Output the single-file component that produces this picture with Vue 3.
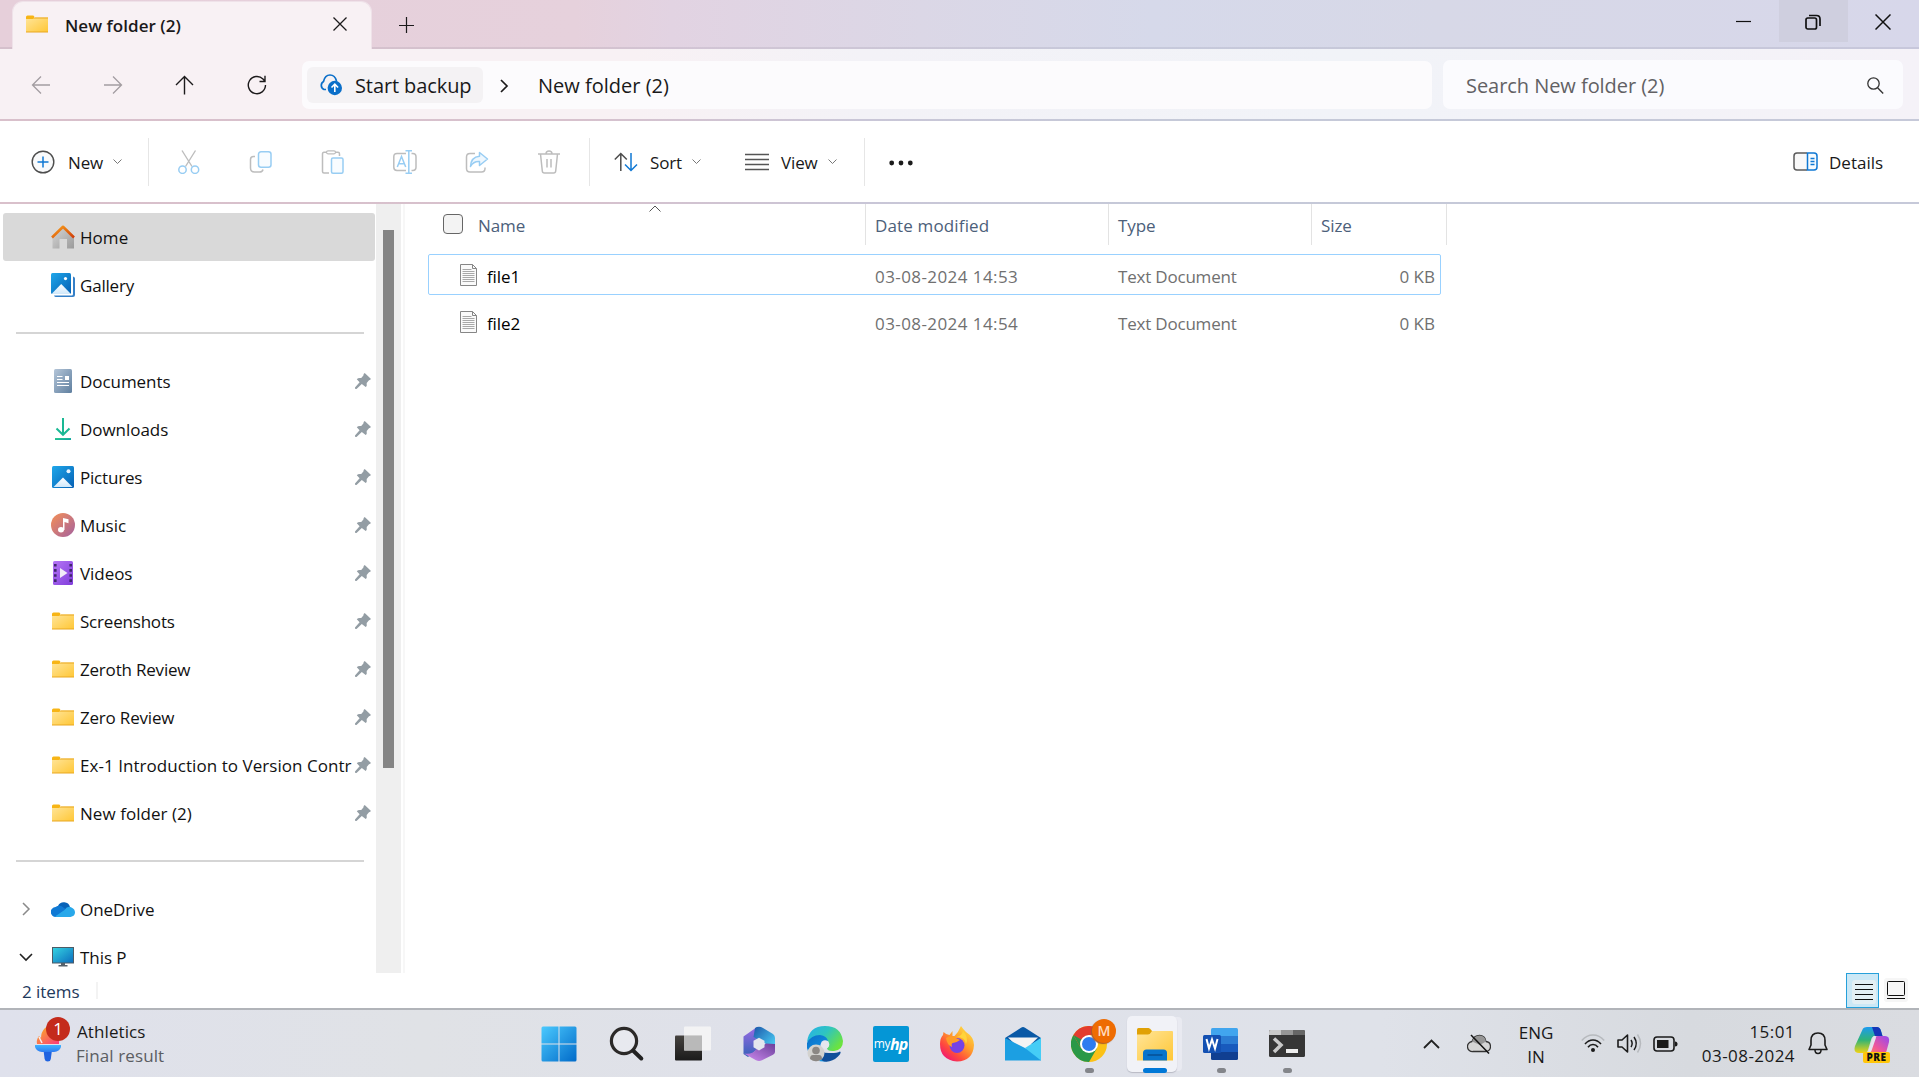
<script setup>
const places = [
  { label: 'Documents', icon: 'documents' },
  { label: 'Downloads', icon: 'downloads' },
  { label: 'Pictures', icon: 'pictures', tight: true },
  { label: 'Music', icon: 'music' },
  { label: 'Videos', icon: 'videos' },
  { label: 'Screenshots', icon: 'folder', tight: true },
  { label: 'Zeroth Review', icon: 'folder', tight: true },
  { label: 'Zero Review', icon: 'folder', tight: true },
  { label: 'Ex-1 Introduction to Version Contr', icon: 'folder', long: true },
  { label: 'New folder (2)', icon: 'folder', long: true },
]
const nav = ['back', 'forward', 'up', 'refresh']
const tools = ['cut', 'copy', 'paste', 'rename', 'share', 'trash']
const files = [
  { name: 'file1', date: '03-08-2024 14:53', type: 'Text Document', size: '0 KB', focused: true },
  { name: 'file2', date: '03-08-2024 14:54', type: 'Text Document', size: '0 KB', focused: false },
]
const apps = [
  { id: 'start' }, { id: 'search' }, { id: 'taskview' }, { id: 'm365' }, { id: 'edge' },
  { id: 'myhp' }, { id: 'firefox' }, { id: 'mail' }, { id: 'chrome', open: true },
  { id: 'explorer', active: true }, { id: 'word', open: true }, { id: 'terminal', open: true },
]
</script>

<template>
  <div class="screen">
    <svg class="defs" width="0" height="0" aria-hidden="true">
      <defs>
        <linearGradient id="gFolder" x1="0" y1="0" x2="1" y2="1"><stop offset="0" stop-color="#ffe59a" /><stop offset="1" stop-color="#ffc736" /></linearGradient>
        <linearGradient id="gBlue" x1="0" y1="0" x2="1" y2="1"><stop offset="0" stop-color="#1fa7ea" /><stop offset="1" stop-color="#0560b4" /></linearGradient>
        <linearGradient id="gSnow" x1="0" y1="0" x2="0" y2="1"><stop offset="0" stop-color="#fff" /><stop offset="1" stop-color="#cfe8fb" /></linearGradient>
        <linearGradient id="gRoof" x1="0" y1="0" x2="1" y2="1"><stop offset="0" stop-color="#f9a11b" /><stop offset="1" stop-color="#d13d0a" /></linearGradient>
        <linearGradient id="gWall" x1="0" y1="0" x2="1" y2="1"><stop offset="0" stop-color="#d8d8d8" /><stop offset="1" stop-color="#9a9a9a" /></linearGradient>
        <linearGradient id="gDoc" x1="0" y1="0" x2="1" y2="1"><stop offset="0" stop-color="#b4c5d8" /><stop offset="1" stop-color="#5f7f9f" /></linearGradient>
        <linearGradient id="gDown" x1="0" y1="0" x2="1" y2="1"><stop offset="0" stop-color="#2fd08c" /><stop offset="1" stop-color="#0d9ca6" /></linearGradient>
        <linearGradient id="gMusic" x1="0" y1="0" x2="1" y2="1"><stop offset="0" stop-color="#f59056" /><stop offset="1" stop-color="#a4619f" /></linearGradient>
        <linearGradient id="gVideo" x1="0" y1="0" x2="1" y2="1"><stop offset="0" stop-color="#b575f5" /><stop offset="1" stop-color="#803ddb" /></linearGradient>
        <linearGradient id="gScreen" x1="0" y1="0" x2="1" y2="1"><stop offset="0" stop-color="#35d5e2" /><stop offset="1" stop-color="#0b6bbd" /></linearGradient>
        <linearGradient id="gWin" gradientUnits="userSpaceOnUse" x1="0" y1="0" x2="36" y2="36"><stop offset="0" stop-color="#4ccbff" /><stop offset="1" stop-color="#0069c8" /></linearGradient>
        <linearGradient id="gFlame" x1="0" y1="0" x2="1" y2="1"><stop offset="0" stop-color="#fbb41c" /><stop offset="1" stop-color="#fb3a7f" /></linearGradient>
        <linearGradient id="gTorch" x1="0" y1="0" x2="0" y2="1"><stop offset="0" stop-color="#3fb4ff" /><stop offset="1" stop-color="#2e7bf0" /></linearGradient>
        <linearGradient id="gDark" x1="0" y1="0" x2="0" y2="1"><stop offset="0" stop-color="#45423f" /><stop offset="1" stop-color="#1b1b1b" /></linearGradient>
        <linearGradient id="gEdge" x1="0" y1="0" x2="1" y2=".6"><stop offset="0" stop-color="#25b0ec" /><stop offset=".5" stop-color="#2fc4c0" /><stop offset="1" stop-color="#6be33f" /></linearGradient>
        <linearGradient id="gEdge2" x1="0" y1="0" x2=".6" y2="1"><stop offset="0" stop-color="#0a6fc9" /><stop offset="1" stop-color="#1498e6" /></linearGradient>
        <linearGradient id="gFox" x1="1" y1="0" x2=".2" y2="1"><stop offset="0" stop-color="#fff04a" /><stop offset=".45" stop-color="#ffa02c" /><stop offset=".75" stop-color="#ff4a3d" /><stop offset="1" stop-color="#ee1179" /></linearGradient>
        <linearGradient id="gM1" x1="0" y1="0" x2="0" y2="1"><stop offset="0" stop-color="#9b6be4" /><stop offset="1" stop-color="#3561b8" /></linearGradient>
        <linearGradient id="gM2" x1="0" y1="0" x2="1" y2="1"><stop offset="0" stop-color="#1c56a8" /><stop offset="1" stop-color="#4fdbff" /></linearGradient>
        <linearGradient id="gM3" x1="0" y1="1" x2="1" y2="0"><stop offset="0" stop-color="#d18df2" /><stop offset="1" stop-color="#6a3f9a" /></linearGradient>
        <linearGradient id="gCo1" x1="0" y1="0" x2="0" y2="1"><stop offset="0" stop-color="#1c9af0" /><stop offset=".5" stop-color="#30b477" /><stop offset="1" stop-color="#f2d312" /></linearGradient>
        <linearGradient id="gCo2" x1="1" y1="0" x2="0" y2="1"><stop offset="0" stop-color="#9348f2" /><stop offset=".6" stop-color="#f0569a" /><stop offset="1" stop-color="#ff8a52" /></linearGradient>
      </defs>

      <symbol id="i-folder" viewBox="0 0 24 24">
        <path d="M1 5q0-1.500 1.500-1.500H8q.8 0 1 .8L9.500 8H1z" fill="#f7b516" /><path d="M1 7h7l2-1.500h13v14.500H1z" fill="url(#gFolder)" /><path d="M9.500 5.500H23v1H8.800zM1 19.400h22v1H1z" fill="#e9a820" />
      </symbol>
      <symbol id="i-home" viewBox="0 0 24 24">
        <path d="M1.500 23.500V11L12 2l11 9v12.500h-7V14H8.500v9.500z" fill="url(#gWall)" /><path d="M1 12.500 12 1.800l11 10.700" fill="none" stroke="url(#gRoof)" stroke-width="2.600" stroke-linejoin="round" />
      </symbol>
      <symbol id="i-gallery" viewBox="0 0 24 24">
        <path d="M22 3.500q2 .3 2 2V22q0 2-2 2H5q-1.500 0-2-1.600h17.500q1.500 0 1.500-1.500z" fill="#3580c8" /><rect width="20" height="21" rx="1.500" fill="url(#gBlue)" /><path d="m1 20.500 9.200-9.600 9.300 9.600q-.4.500-1 .5H2q-.7 0-1-.5z" fill="url(#gSnow)" /><circle cx="14.500" cy="5.600" r="1.600" fill="#fff" />
      </symbol>
      <symbol id="i-pictures" viewBox="0 0 24 24">
        <rect x="1" y="1" width="22" height="22" rx="1.500" fill="url(#gBlue)" /><path d="M2.500 22 12 12.500l9.500 9.500z" fill="url(#gSnow)" /><circle cx="17.500" cy="6.300" r="2" fill="#e6f4ff" />
      </symbol>
      <symbol id="i-documents" viewBox="0 0 24 24">
        <rect x="3" width="18" height="24" rx="1.500" fill="url(#gDoc)" /><path d="M6 7.500h5.500M6 10.500h5.500M6 13.500h12M6 16.500h12" stroke="#fff" stroke-width="1.200" /><rect x="14" y="7" width="4" height="4" fill="#fff" />
      </symbol>
      <symbol id="i-downloads" viewBox="0 0 24 24">
        <path d="M12 1v16.500M5.500 11.500l6.500 6.300 6.500-6.300" fill="none" stroke="#1ab894" stroke-width="2" /><rect x="4" y="21" width="16" height="2" fill="url(#gDown)" />
      </symbol>
      <symbol id="i-music" viewBox="0 0 24 24">
        <circle cx="12" cy="12" r="12" fill="url(#gMusic)" /><ellipse cx="10" cy="16.800" rx="3" ry="2.700" fill="#fff" /><path d="M12 17V5l5.500 1.300v4L13.500 9v8z" fill="#fff" />
      </symbol>
      <symbol id="i-videos" viewBox="0 0 24 24">
        <rect x="2" width="20" height="24" rx="1.500" fill="url(#gVideo)" /><path d="M4.300 3v19M19.700 3v19" stroke="#40276e" stroke-width="2.600" stroke-dasharray="2.600 2.500" /><path d="m9 7 7.500 5L9 17z" fill="#f1ecf8" />
      </symbol>
      <symbol id="i-onedrive" viewBox="0 0 24 24">
        <path d="M7 9a6.400 6.400 0 0 1 12 1l-7 5z" fill="#0762b8" /><path d="M5 20a5 5 0 0 1-.5-10Q9 7 13 11l5 3-8 6z" fill="#0f79d4" /><path d="M4 19.500 13.500 13q3-4.500 7-2.600Q24 12 24 15.500T19.500 20H5.500z" fill="#28a8ea" />
      </symbol>
      <symbol id="i-thispc" viewBox="0 0 24 24">
        <rect x="1.500" y="2.500" width="21" height="15.500" fill="url(#gScreen)" stroke="#4d5b66" /><path d="M10 18h4v2h2.500v1.500h-9V20H10z" fill="#56616a" />
      </symbol>
      <symbol id="i-pin" viewBox="0 0 16 16">
        <path d="M9.700 0 15.800 5.800q0 1.400-1.800 1.500l-2.300 2.600q.5 3-1 4L6.800 11 1.500 16 0 15.800V14.500L4.600 9.200 1.800 6.300Q3 4.600 6.200 5.100L8.400 2.500Q8.300.6 9.700 0z" fill="#939da4" />
      </symbol>
      <symbol id="i-file" viewBox="0 0 17 22">
        <path d="M.5.500h12l4 4v17H.500z" fill="#fafafa" stroke="#868686" /><path d="M12.500.500v4h4" fill="none" stroke="#868686" /><path d="M2.500 5.500h9M2.500 7.500h12M2.500 9.500h12M2.500 11.500h12M2.500 13.500h12M2.500 15.500h12M2.500 17.500h12" stroke="#a8a8a8" />
      </symbol>

      <symbol id="i-back" viewBox="0 0 20 20"><path d="M19 10H1.500M10 1.500 1.500 10l8.500 8.500" fill="none" stroke="#a39da1" stroke-width="1.300" /></symbol>
      <symbol id="i-forward" viewBox="0 0 20 20"><path d="M1 10h17.500M10 1.500l8.500 8.500-8.500 8.500" fill="none" stroke="#a39da1" stroke-width="1.300" /></symbol>
      <symbol id="i-up" viewBox="0 0 20 20"><path d="M9.500 19.500V1.500M1 10l8.500-8.500L18 10" fill="none" stroke="#1c1a1b" stroke-width="1.400" /></symbol>
      <symbol id="i-refresh" viewBox="0 0 20 20"><path d="M18.500 10A8.600 8.600 0 1 1 16 4l1.800 2M18 .8V6.500h-5.500" fill="none" stroke="#1c1a1b" stroke-width="1.400" /></symbol>

      <symbol id="i-cut" viewBox="0 0 24 24"><path d="M5 .500 15 16.500M18.500.500 8.500 16.500" fill="none" stroke="#bdbdbd" stroke-width="1.400" /><g fill="none" stroke="#98cdf3" stroke-width="1.500"><circle cx="5.500" cy="19.700" r="3.700" /><circle cx="18" cy="19.700" r="3.700" /></g></symbol>
      <symbol id="i-copy" viewBox="0 0 24 24"><path d="M6 6.500H4.500Q1.500 6.500 1.500 9.500v8.500q0 4 4 4h5q3 0 3.500-2.500" fill="none" stroke="#bdbdbd" stroke-width="1.500" /><rect x="9.500" y="1.800" width="12.500" height="15.500" rx="2.500" fill="#f8fcff" stroke="#98cdf3" stroke-width="1.500" /></symbol>
      <symbol id="i-paste" viewBox="0 0 24 24"><path d="M8 23H3Q1.500 23 1.500 21.500V4Q1.500 2.300 3 2.300h3M14 2.300h3q1.500 0 1.500 1.700v2" fill="none" stroke="#bdbdbd" stroke-width="1.500" /><rect x="5.500" y=".8" width="9" height="3" rx="1.500" fill="none" stroke="#bdbdbd" stroke-width="1.200" /><rect x="10.500" y="8" width="11.500" height="15.200" rx="1.500" fill="#f8fcff" stroke="#98cdf3" stroke-width="1.500" /></symbol>
      <symbol id="i-rename" viewBox="0 0 24 24"><path d="M13 3.500H4Q.8 3.500.8 6.700v10.600q0 3.200 3.200 3.200h9M18.500 3.500h1.200q3.300 0 3.300 3.200v10.600q0 3.200-3.300 3.200h-1.200" fill="none" stroke="#bdbdbd" stroke-width="1.500" /><path d="M4.300 17 8.500 6.500 12.700 17M5.700 13.800h5.600M12.500.800h6.500M15.800.800v22.400M12.500 23.200h6.500" fill="none" stroke="#98cdf3" stroke-width="1.500" /></symbol>
      <symbol id="i-share" viewBox="0 0 24 24"><path d="M10 3.500H5Q1.500 3.500 1.500 7v11.500Q1.500 22 5 22h11.500q3.500 0 3.500-3.500v-1" fill="none" stroke="#bdbdbd" stroke-width="1.500" /><path d="M14.500 2.500 22.500 9l-8 6.500v-4Q8.500 11 5.500 16.500 6 7 14.500 6.300z" fill="#eef7fe" stroke="#98cdf3" stroke-width="1.500" stroke-linejoin="round" /></symbol>
      <symbol id="i-trash" viewBox="0 0 24 24"><path d="M1 4h22M9 4q0-3 3-3t3 3M3.500 4l1.800 17q.2 2 2 2h9.400q1.800 0 2-2L20.500 4M10 9v8.500M14 9v8.500" fill="none" stroke="#bdbdbd" stroke-width="1.500" /></symbol>

      <symbol id="t-start" viewBox="0 0 36 36"><path d="M.500 2q0-1.500 1.500-1.500h15.500v17H.500zM18.500.500H34q1.500 0 1.500 1.500v15.500h-17zM.500 18.500h17v17H2Q.500 35.500.500 34zM18.500 18.500h17V34q0 1.500-1.500 1.500H18.500z" fill="url(#gWin)" /></symbol>
      <symbol id="t-search" viewBox="0 0 36 36"><circle cx="15" cy="15" r="12.600" fill="#eceef3" fill-opacity=".6" stroke="#2b2928" stroke-width="3.200" /><path d="m24.500 25 7.800 7.500" stroke="#222" stroke-width="4" stroke-linecap="round" /></symbol>
      <symbol id="t-taskview" viewBox="0 0 36 36"><rect y="9.500" width="27" height="25" rx="1" fill="url(#gDark)" /><rect x="9" y=".5" width="27" height="24" rx="1" fill="#f5f5f5" fill-opacity=".9" /><path d="M9 9.500h18v15H9z" fill="#b9b9b9" /></symbol>
      <symbol id="t-m365" viewBox="0 0 36 36"><path d="M2.500 10.500 16 1v22.500L7 31l-4.500-3z" fill="url(#gM1)" /><path d="M14 2q4-2.500 8 0l10 6q2 1.300 2 4v12L23.500 17 12.500 11z" fill="url(#gM2)" /><path d="M34 18v8q0 1.500-2 2.700L21 34.300q-3 1.600-6 0L3 27.500q8 1.500 12-4l10-6z" fill="url(#gM3)" /><path d="m18 11.800 5.500 3v6.500L18 24.500l-5.500-3.200v-6.500z" fill="#e4e6ee" /></symbol>
      <symbol id="t-edge" viewBox="0 0 36 36"><path d="M0 16Q2 0 18 0q16 0 18 15 0 9-9 10-7 .5-7-3 3-3 1-7Q14 7 0 16z" fill="url(#gEdge)" /><path d="M0 17Q4 9 13 9q7 1 8 6-8 0-8 7 0 8 9 13Q4 38 0 22z" fill="url(#gEdge2)" /><path d="M13 20q0 8 11 7 6 0 9-1.500 2 1-2 5-6 6-14 5-7-3-4-15.500z" fill="#114f9a" /><circle cx="18" cy="18.500" r="4.300" fill="#e4e7ee" /><circle cx="9" cy="27" r="8.500" fill="#d3d2cf" /><circle cx="9" cy="24.500" r="3.800" fill="#8b8784" /><path d="M3 33q0-4 3-4h6q3 0 3 4-6 4.500-12 0z" fill="#8b8784" /></symbol>
      <symbol id="t-firefox" viewBox="0 0 36 36"><path d="M22 0q2 3 5 6 8 5 8 13-1 16-17 16.500Q1 34 1 18q0-6 3-9l.5-3q3 3 6 3l3-4v5h2q4-4 6.500-10z" fill="url(#gFox)" /><circle cx="18" cy="19.500" r="7.500" fill="#7542e5" /><path d="M7 12q4-3 9-.5l5 2.500q-4 3-7 3-2 0-1 4-5-2-6-9z" fill="#ff9b27" /><path d="M18 11q8 0 9 7 3-7-3-13-1 5-6 6z" fill="#ffd43a" /></symbol>
      <symbol id="t-mail" viewBox="0 0 36 36"><path d="M0 12 16 1.800q2-1.600 4 0L36 12v6H0z" fill="#0a59a6" /><path d="M3 11.500h30L18 26z" fill="#f4f4f4" /><path d="M0 12l22 11 14-11v22.500H0z" fill="#1c9fe2" /><path d="M36 12v22.500L20 22z" fill="#45cdf6" /></symbol>
      <symbol id="t-chrome" viewBox="0 0 36 36"><circle cx="18" cy="18" r="18" fill="#fbc116" /><path d="M2.400 9A18 18 0 0 1 33.600 9H18z" fill="#e33b2e" /><path d="M2.400 9A18 18 0 0 0 18 36l7.800-13.500H10.200z" fill="#2a9847" /><path d="M2.400 9 10.200 22.500 18 9z" fill="#e33b2e" /><path d="M2.400 9 10.200 22.500 18 18z" fill="#2a9847" /><circle cx="18" cy="18" r="9" fill="#fff" /><circle cx="18" cy="18" r="7" fill="#2d7cf0" /></symbol>
      <symbol id="t-explorer" viewBox="0 0 36 36"><path d="M0 3.500Q0 2 1.500 2h10Q13 2 15 5v5H0z" fill="#e0a106" /><path d="M0 8.500h11q2 0 4-3.500h20q1 0 1 1v28.500H0z" fill="url(#gFolder)" /><path d="M6 34.500V27q0-3.500 3.500-3.500h17Q30 23.500 30 27v7.500z" fill="#0874cc" /><path d="M10.500 29h15" stroke="#064f94" stroke-width="1.500" /></symbol>
      <symbol id="t-word" viewBox="0 0 36 36"><path d="M8 3.500Q8 2 9.500 2h24Q35 2 35 3.500V10H8z" fill="#41a5ee" /><path d="M8 10h27v8H8z" fill="#2b7cd3" /><path d="M8 18h27v8H8z" fill="#185abd" /><path d="M8 26h27v6.500q0 1.500-1.500 1.500h-24Q8 34 8 32.500z" fill="#103f91" /><rect y="9" width="18" height="18" rx="1.500" fill="#1350b2" /><path d="m3.500 13 2.500 9.500 3-9 3 9 2.500-9.500" fill="none" stroke="#fff" stroke-width="2" /></symbol>
      <symbol id="t-terminal" viewBox="0 0 36 36"><rect y="4" width="36" height="27" rx="1.500" fill="#363636" /><path d="M0 5.500Q0 4 1.500 4H12v5H0z" fill="#c8c8c8" /><path d="M12 4h12v5H12z" fill="#969696" /><path d="M24 4h10.500Q36 4 36 5.500V9H24z" fill="#666" /><path d="m5 12.500 7 6.500-7 7" fill="none" stroke="#c9c9c9" stroke-width="3.500" /><rect x="17" y="23" width="12" height="4" fill="#eee" /></symbol>
    </svg>

    <header class="titlebar">
      <div class="tab">
        <svg class="ico24"><use href="#i-folder" /></svg>
        <span class="tab-title">New folder (2)</span>
        <svg class="tab-x" width="14" height="14" viewBox="0 0 14 14"><path d="m.5.500 13 13m0-13-13 13" stroke="#1c1a1b" stroke-width="1.300" /></svg>
      </div>
      <svg class="newtab" width="16" height="16" viewBox="0 0 16 16"><path d="M7.500 0v16M0 8.500h15" stroke="#1c1a1b" stroke-width="1.200" /></svg>
      <div class="win">
        <span><svg width="15" height="15" viewBox="0 0 15 15"><path d="M0 7.500h15" stroke="#111" stroke-width="1.200" /></svg></span>
        <span class="hover"><svg width="16" height="16" viewBox="0 0 16 16"><rect x="1" y="4" width="10.500" height="11" rx="1.800" fill="none" stroke="#111" stroke-width="1.700" /><path d="M4 1.500h7.500Q15 1.500 15 5v7" fill="none" stroke="#111" stroke-width="1.700" /></svg></span>
        <span class="close"><svg width="16" height="16" viewBox="0 0 16 16"><path d="m.5.500 15 15m0-15-15 15" stroke="#111" stroke-width="1.500" /></svg></span>
      </div>
    </header>

    <nav class="navbar">
      <div class="navbtns"><span v-for="n in nav" :key="n"><svg class="ico20"><use :href="'#i-' + n" /></svg></span></div>
      <div class="address">
        <div class="chip">
          <svg width="24" height="22" viewBox="0 0 24 22"><path d="M7 15.500H5A4.500 4.500 0 0 1 4.500 7.500Q6 1 11 1t6.500 6" fill="none" stroke="#0a6fc9" stroke-width="1.700" /><circle cx="15.800" cy="14" r="7.200" fill="#0a6fc9" /><path d="M15.800 18v-7.500M12.500 13.500l3.300-3.300 3.300 3.300" fill="none" stroke="#fff" stroke-width="1.600" /></svg>
          <span>Start backup</span>
        </div>
        <svg class="crumb" width="9" height="14" viewBox="0 0 9 14"><path d="m1 1 6 6-6 6" fill="none" stroke="#1c1a1b" stroke-width="1.700" /></svg>
        <span class="here">New folder (2)</span>
      </div>
      <div class="search">
        <span>Search New folder (2)</span>
        <svg width="17" height="17" viewBox="0 0 17 17"><circle cx="6.500" cy="6.500" r="5.700" fill="none" stroke="#333" stroke-width="1.300" /><path d="m10.600 10.800 5.600 5.600" stroke="#333" stroke-width="1.400" /></svg>
      </div>
    </nav>

    <div class="toolbar">
      <div class="tbtn new">
        <svg width="24" height="24" viewBox="0 0 24 24"><circle cx="12" cy="12" r="10.800" fill="#f9fafb" stroke="#4d4d4d" stroke-width="1.400" /><path d="M12 6.500v11M6.500 12h11" stroke="#0f78d4" stroke-width="1.500" /></svg>
        <span>New</span><svg class="chev" viewBox="0 0 9 5"><path d="m.5.500 4 4 4-4" fill="none" stroke="#777" /></svg>
      </div>
      <i class="vsep"></i>
      <div class="tools"><span v-for="t in tools" :key="t"><svg class="ico24"><use :href="'#i-' + t" /></svg></span></div>
      <i class="vsep"></i>
      <div class="tbtn sort">
        <svg width="24" height="20" viewBox="0 0 24 20"><path d="M6.800 19V1.500M.8 7.500l6-6 6 6" fill="none" stroke="#4d4d4d" stroke-width="1.500" /><path d="M17 1v17.500M11 12.500l6 6 6-6" fill="none" stroke="#0f78d4" stroke-width="1.500" /></svg>
        <span>Sort</span><svg class="chev" viewBox="0 0 9 5"><path d="m.5.500 4 4 4-4" fill="none" stroke="#777" /></svg>
      </div>
      <div class="tbtn view">
        <svg width="24" height="18" viewBox="0 0 24 18"><path d="M0 1.500h24M0 6.500h24M0 11.500h24M0 16.500h24" stroke="#555" stroke-width="1.400" /></svg>
        <span>View</span><svg class="chev" viewBox="0 0 9 5"><path d="m.5.500 4 4 4-4" fill="none" stroke="#777" /></svg>
      </div>
      <i class="vsep"></i>
      <svg class="more" width="24" height="6" viewBox="0 0 24 6"><g fill="#1b1b1b"><circle cx="2.700" cy="3" r="2.400" /><circle cx="12" cy="3" r="2.400" /><circle cx="21.300" cy="3" r="2.400" /></g></svg>
      <div class="tbtn details">
        <svg width="25" height="19" viewBox="0 0 25 19"><path d="M14 1H4Q1 1 1 4v11q0 3 3 3h10" fill="#f9f9f9" stroke="#5b5b5b" stroke-width="1.500" /><path d="M14.500 1H21q3 0 3 3v11q0 3-3 3h-6.500z" fill="#f5fbff" stroke="#0f78d4" stroke-width="1.500" /><path d="M17.500 6.500h4M17.500 9.500h4M17.500 12.500h4" stroke="#0f78d4" stroke-width="1.300" /></svg>
        <span>Details</span>
      </div>
    </div>

    <main class="body">
      <aside class="side">
        <div class="row selected"><svg class="ico24"><use href="#i-home" /></svg><span class="long">Home</span></div>
        <div class="row"><svg class="ico24"><use href="#i-gallery" /></svg><span class="tight">Gallery</span></div>
        <div class="rule"><i></i></div>
        <div v-for="p in places" :key="p.label" class="row">
          <svg class="ico24"><use :href="'#i-' + p.icon" /></svg><span :class="{ long: p.long, tight: p.tight }">{{ p.label }}</span>
          <svg class="pin"><use href="#i-pin" /></svg>
        </div>
        <div class="rule"><i></i></div>
        <div class="row tree">
          <svg class="twist" viewBox="0 0 14 14"><path d="m4 1 6 6-6 6" fill="none" stroke="#8a8a8a" stroke-width="1.500" /></svg>
          <svg class="ico24"><use href="#i-onedrive" /></svg><span>OneDrive</span>
        </div>
        <div class="row tree">
          <svg class="twist" viewBox="0 0 14 14"><path d="m1 4 6 6 6-6" fill="none" stroke="#222" stroke-width="1.600" /></svg>
          <svg class="ico24"><use href="#i-thispc" /></svg><span>This P</span>
        </div>
      </aside>
      <div class="scroll"><div class="thumb"></div></div>
      <section class="list">
        <div class="head">
          <div class="c-name"><i class="check"></i><span>Name</span>
            <svg class="asc" width="12" height="7" viewBox="0 0 12 7"><path d="m.5 6.500 5.500-5.500 5.500 5.500" fill="none" stroke="#555" /></svg>
          </div>
          <div class="c-date">Date modified</div><div class="c-type">Type</div><div class="c-size">Size</div>
        </div>
        <div v-for="f in files" :key="f.name" class="file" :class="{ focused: f.focused }">
          <svg width="17" height="22"><use href="#i-file" /></svg>
          <span class="fname">{{ f.name }}</span><span class="fdate">{{ f.date }}</span><span class="ftype">{{ f.type }}</span><span class="fsize">{{ f.size }}</span>
        </div>
      </section>
    </main>

    <div class="status">
      <span>2 items</span><i></i>
      <div class="mode on"><svg width="24" height="24" viewBox="0 0 24 24"><rect width="24" height="24" rx="3" fill="#e3eff4" /><path d="M3 4.500h18M3 9.500h18M3 14.500h18M3 19.500h18" stroke="#111" stroke-width="1.100" /></svg></div>
      <div class="mode"><svg width="24" height="24" viewBox="0 0 24 24"><rect width="24" height="24" rx="3" fill="#f6f6f6" /><rect x="3.500" y="3.500" width="17" height="14" rx="1" fill="none" stroke="#111" /><path d="M3 20.500h18" stroke="#111" /></svg></div>
    </div>

    <footer class="taskbar">
      <div class="widget">
        <div class="torch">
          <svg width="28" height="40" viewBox="0 0 28 40"><path d="M3 20q-1-4 2-8l2 2Q7 8 11 4q6-4 11 3 4 5 3 13z" fill="url(#gFlame)" /><path d="m5 13 3 6" stroke="#f5eef0" stroke-width="1.500" /><path d="M9.500 26h8.500l-1.200 9q-.3 2.500-3 2.500T10.600 35z" fill="#1f63e0" /><path d="M1 21h26v2q-1.500 4.500-7 5H8q-5.500-.5-7-5z" fill="url(#gTorch)" /></svg>
          <b>1</b>
        </div>
        <div class="wtext"><span>Athletics</span><span class="sub">Final result</span></div>
      </div>
      <div class="apps">
        <div v-for="a in apps" :key="a.id" class="app" :class="{ active: a.active, open: a.open, first: a.id === 'start' }">
          <div v-if="a.id === 'myhp'" class="hp"><span>my</span><em>hp</em></div>
          <svg v-else class="ico36"><use :href="'#t-' + a.id" /></svg>
          <b v-if="a.id === 'chrome'" class="m">M</b>
        </div>
      </div>
      <div class="tray">
        <svg class="t-up" width="17" height="10" viewBox="0 0 17 10"><path d="m1 9 7.500-7.500L16 9" fill="none" stroke="#222" stroke-width="1.800" /></svg>
        <svg class="t-cloud" width="24" height="20" viewBox="0 0 24 20"><path d="M6 17.500A5 5 0 0 1 5 7.500Q7 1.500 12.500 1.500T19 7.500q4.500.5 4.500 5t-4.500 5z" fill="#d5d5d5" stroke="#333" stroke-width="1.300" /><path d="M5 7.500Q7 1.500 12.500 1.500T19 7.500L13 11z" fill="#969696" /><path d="m4 1 18 18.500" stroke="#111" stroke-width="1.500" /></svg>
        <div class="lang"><span>ENG</span><span>IN</span></div>
        <svg class="t-wifi" width="24" height="19" viewBox="0 0 24 19"><g fill="none"><path d="M.8 6.500Q5.500 1 12 1t11.200 5.500" stroke="#b7babe" stroke-width="1.500" /><path d="M4 10q3.500-4 8-4t8 4M7 13.200Q9 10.500 12 10.500t5 2.700" stroke="#1b1b1b" stroke-width="1.600" /></g><circle cx="12" cy="16" r="2" fill="#1b1b1b" /></svg>
        <svg class="t-vol" width="25" height="21" viewBox="0 0 25 21"><path d="M1 7h4l5.500-5v17L5 14H1z" fill="none" stroke="#1b1b1b" stroke-width="1.600" stroke-linejoin="round" /><path d="M14 7q2.300 3.500 0 7M17 4q4.500 6.500 0 13" fill="none" stroke="#1b1b1b" stroke-width="1.500" /><path d="M20.500 1.500q6 9 0 18" fill="none" stroke="#b7babe" stroke-width="1.500" /></svg>
        <svg class="t-bat" width="25" height="16" viewBox="0 0 25 16"><rect x="1" y="1" width="20" height="14" rx="3" fill="none" stroke="#1b1b1b" stroke-width="1.600" /><rect x="4" y="4" width="11.500" height="8" fill="#1b1b1b" /><path d="M22 5.500q2.500 0 2.500 2.500T22 10.500z" fill="#1b1b1b" /></svg>
        <div class="clock"><span>15:01</span><span>03-08-2024</span></div>
        <svg class="t-bell" width="20" height="23" viewBox="0 0 20 23"><path d="M10 1q7 0 7 7.500V13l2 4.500H1L3 13V8.500Q3 1 10 1z" fill="none" stroke="#1b1b1b" stroke-width="1.600" stroke-linejoin="round" /><path d="M7 18q0 3.500 3 3.500t3-3.500" fill="none" stroke="#1b1b1b" stroke-width="1.500" /></svg>
        <div class="copilot">
          <svg width="36" height="30" viewBox="0 0 36 30"><path d="M9 1.500Q10 0 13 0h9q4 0 5 4l1.500 5H21q-3 0-4 4l-3 10q-1 3-4 3H5q-6 0-4-7z" fill="url(#gCo1)" /><path d="M18 0h5q3 0 4 4l1.500 5H21z" fill="#1536b8" /><path d="M27 9h4q5 0 4 6l-2.500 9q-1 3-4 3H13q3 0 4-4l3-10q1-4 4-4z" fill="url(#gCo2)" /><path d="m20.500 10.500-4.500 13" stroke="#e6e3ef" stroke-width="3" stroke-linecap="round" /></svg>
          <b>PRE</b>
        </div>
      </div>
    </footer>
  </div>
</template>

<style>
body { margin: 0; overflow: hidden; }
</style>

<style scoped>
.screen { width: 1919px; height: 1077px; display: flex; flex-direction: column; background: #fff; overflow: hidden; position: relative; font-family: "Open Sans", "Noto Sans", sans-serif; font-size: 17px; line-height: 24px; color: #191919; white-space: nowrap; letter-spacing: -0.05px; }
.defs { position: absolute; }
svg { display: block; flex: none; }
.ico24 { width: 24px; height: 24px; }
.ico20 { width: 20px; height: 20px; }
.ico36 { width: 36px; height: 36px; }

.titlebar { height: 47px; flex: none; display: flex; border-bottom: 2px solid #00002012; background: linear-gradient(90deg, #e6cfda 0, #e6d1dc 30%, #e2d3e2 35%, #dbd7e6 48%, #d6d9ea 60%, #d7d8e7 75%, #d7d7ea 100%); }
.tab { width: 360px; height: 48px; margin: 1px 0 -2px 12px; box-sizing: border-box; padding: 0 24px 4px 12px; background: #f8f1f4; border: 1px solid #efe2e9; border-bottom: 0; border-radius: 11px 11px 0 0; display: flex; align-items: center; z-index: 1; }
.tab-title { font-weight: 600; font-size: 17px; letter-spacing: 0.050px; margin: 5px auto 0 16px; color: #1b191a; }
.newtab { margin: 17px 0 0 27px; }
.win { margin-left: auto; display: flex; height: 42px; padding-right: 2px; }
.win span { width: 69px; display: flex; align-items: center; justify-content: center; box-sizing: border-box; padding: 1px 2px 0 0; }
.win span.close { padding-right: 0; }
.win span.hover { background: #cfcfdf; }

.navbar { height: 70px; flex: none; display: flex; border-bottom: 2px solid #cfc5d3; border-image: linear-gradient(90deg, #d9c0cb 0, #d7c1cd 30%, #c9c6d7 45%, #c5c9d8 60%, #c6c9d9 100%) 1; background: linear-gradient(90deg, #f8f1f4 0, #f8f1f4 33%, #f3f2f7 45%, #f1f3f8 70%, #f5f2f8 100%); font-size: 20px; letter-spacing: -0.100px; }
.navbtns { display: flex; padding: 1px 9px 0 5px; }
.navbtns span { width: 72px; display: flex; align-items: center; justify-content: center; }
.address { width: 1130px; height: 48px; margin-top: 12px; box-sizing: border-box; padding-left: 5px; border-radius: 7px; display: flex; align-items: center; background: #fcfbfd; }
.address span, .search span { padding-top: 2px; }
.chip { width: 176px; height: 36px; box-sizing: border-box; padding-left: 12px; display: flex; align-items: center; gap: 12px; background: #f4f2f4; border-radius: 6px; }
.crumb { margin: 1px 29px 0 17px; }
.here { letter-spacing: 0; }
.search { width: 460px; height: 49px; margin: 11px 0 0 11px; box-sizing: border-box; padding: 0 19px 0 23px; display: flex; align-items: center; justify-content: space-between; background: #fbfbfe; border-radius: 7px; color: #626164; letter-spacing: -0.050px; }
.search svg { margin-top: 2px; }

.toolbar { height: 81px; flex: none; display: flex; align-items: center; border-bottom: 2px solid #cfc5d3; border-image: linear-gradient(90deg, #d9c0cb 0, #d7c1cd 30%, #c9c6d7 45%, #c5c9d8 60%, #c6c9d9 100%) 1; letter-spacing: -0.150px; }
.tbtn { display: flex; align-items: center; box-sizing: border-box; }
.tbtn span { margin: 2px auto 0 12px; }
.chev { width: 9px; height: 5px; }
.new { width: 148px; padding: 0 26px 0 31px; }
.new span { margin-left: 13px; }
.vsep { width: 1px; height: 48px; background: #e6e6e6; }
.tools { display: flex; padding: 0 4px 0 4px; }
.tools span { width: 72px; display: flex; justify-content: center; }
.sort { width: 112px; margin-left: 24px; }
.sort .chev { margin-right: 25px; }
.view { width: 138px; padding: 0 27px 0 19px; }
.more { margin: 3px auto 0 24px; }
.details { width: 90px; margin-right: 36px; }
.details span { margin-left: 11px; letter-spacing: 0; }

.body { height: 769px; flex: none; display: flex; overflow: hidden; }
.side { width: 376px; padding-top: 9px; flex: none; box-sizing: border-box; overflow: hidden; color: #111; }
.row { height: 48px; margin: 0 1px 0 3px; box-sizing: border-box; padding-left: 48px; display: flex; align-items: center; }
.row > span { margin: 1px auto 0 5px; }
.row > .long { letter-spacing: 0.050px; }
.row > .tight { letter-spacing: -0.200px; }
.selected { background: #d9d9d9; border-radius: 3px; }
.pin { width: 16px; height: 16px; margin-right: 4px; }
.tree { padding-left: 16px; }
.twist { width: 14px; height: 14px; margin-right: 18px; }
.rule { height: 48px; display: flex; align-items: center; }
.rule i { width: 348px; height: 2px; margin-left: 16px; background: #d5d5d5; }
.scroll { width: 25px; flex: none; background: #efefef; box-shadow: 2px 0 0 #fff, 4px 0 0 #f7f7f7; padding: 26px 0 0 7px; box-sizing: border-box; }
.thumb { width: 11px; height: 538px; background: #858585; }
.list { flex: 1; padding-left: 27px; }
.head { height: 41px; display: flex; color: #4c607a; line-height: 43px; margin-bottom: 9px; letter-spacing: -0.100px; }
.head > div { border-right: 1px solid #e3e3e3; box-sizing: border-box; padding-left: 9px; }
.head .c-name { width: 438px; padding-left: 15px; display: flex; }
.check { width: 20px; height: 20px; box-sizing: border-box; border: 1.500px solid #666; border-radius: 4px; background: #f3f3f3; margin: 10px 15px 0 0; }
.asc { margin: 1px 0 0 124px; }
.head .c-date { width: 243px; letter-spacing: 0.150px; }
.c-type { width: 203px; }
.c-size { width: 135px; }
.file { width: 1013px; height: 41px; margin-bottom: 6px; box-sizing: border-box; border: 1px solid transparent; border-radius: 2px; padding: 0 5px 0 31px; display: flex; align-items: center; color: #707070; letter-spacing: -0.200px; }
.file span { padding-top: 4px; }
.focused { border-color: #99d1ff; }
.file .fname { width: 398px; padding-left: 10px; box-sizing: border-box; color: #000; letter-spacing: -0.100px; }
.fdate { width: 243px; letter-spacing: 0.420px; }
.fsize { margin-left: auto; letter-spacing: 0; }

.status { height: 35px; flex: none; display: flex; align-items: center; padding-left: 22px; color: #1e395b; }
.status > span { width: 74px; margin-top: 2px; }
.status > i { width: 2px; height: 17px; background: #f3f3f3; margin-right: auto; }
.mode { display: flex; align-items: center; justify-content: center; width: 33px; height: 35px; box-sizing: border-box; padding-bottom: 1px; margin-right: 7px; }
.mode.on { background: #cbe8f6; border: 1px solid #26a0da; padding: 3px 0 0 3px; margin-right: 0; }

.taskbar { height: 67px; flex: none; border-top: 2px solid #b1b4b9; display: flex; align-items: stretch; background: linear-gradient(90deg, #dfe1ec 0, #e0e2e6 22%, #dfe1ea 40%, #dfe2e9 72%, #d7dadf 88%, #dadce1 100%); }
.widget { width: 526px; display: flex; flex: none; }
.torch { position: relative; width: 28px; margin: 14px 0 0 34px; }
.torch b { position: absolute; left: 12px; top: -7px; width: 24px; height: 24px; border-radius: 50%; background: #c42b1c; color: #fff; font-size: 17px; font-weight: 400; line-height: 24px; text-align: center; }
.wtext { display: flex; flex-direction: column; margin: 10px 0 0 15px; letter-spacing: 0.100px; }
.sub { color: #5b5d62; margin-left: -1px; }
.apps { display: flex; width: 794px; flex: none; }
.app { width: 66px; height: 56px; margin-top: 6px; position: relative; display: flex; align-items: center; justify-content: center; box-sizing: border-box; }
.app.first { padding-right: 2px; width: 68px; }
.app.active { width: 50px; margin: 6px 11px 0 5px; padding-left: 6px; background: #f1f2f7; border-radius: 5px; box-shadow: 0 1px 1px #b8bac4, 6px 0 0 -1px #e9eaf1; }
.app.active::after, .app.open::after { content: ''; position: absolute; top: 52px; width: 9px; height: 5px; border-radius: 3px; background: #83858a; }
.app.active::after { width: 24px; background: #0078d7; }
.hp { width: 36px; height: 36px; border-radius: 2px; background: #0496d6; color: #fff; display: flex; justify-content: center; align-items: center; font-size: 12px; letter-spacing: -0.500px; }
.hp em { font-weight: 700; font-size: 16px; letter-spacing: -1px; padding-right: 1px; }
.m { position: absolute; left: 36px; top: 3px; width: 24px; height: 24px; border-radius: 50%; background: #ee6c02; box-shadow: -1px 1px 1px #a95a2c; color: #ffdcc0; font-size: 14px; font-weight: 600; text-align: center; line-height: 24px; }
.tray { flex: 1; display: flex; align-items: center; }
.t-up { margin-left: 103px; }
.t-cloud { margin-left: 27px; }
.lang, .clock { display: flex; flex-direction: column; line-height: 24px; }
.lang { width: 46px; margin-left: 22px; text-align: center; align-items: center; padding-top: 2px; }
.t-wifi { margin-left: 22px; }
.t-vol { margin-left: 12px; }
.t-bat { margin-left: 11px; }
.clock { width: 117px; align-items: flex-end; letter-spacing: 0.450px; }
.t-bell { margin-left: 13px; }
.copilot { width: 36px; height: 36px; margin: 2px 0 0 26px; position: relative; }
.copilot b { position: absolute; right: 0; bottom: 0; width: 27px; height: 11px; border-radius: 2px; background: #ffc60a; font-size: 10px; line-height: 11px; text-align: center; color: #111; letter-spacing: 0.400px; font-weight: 800; }
</style>
